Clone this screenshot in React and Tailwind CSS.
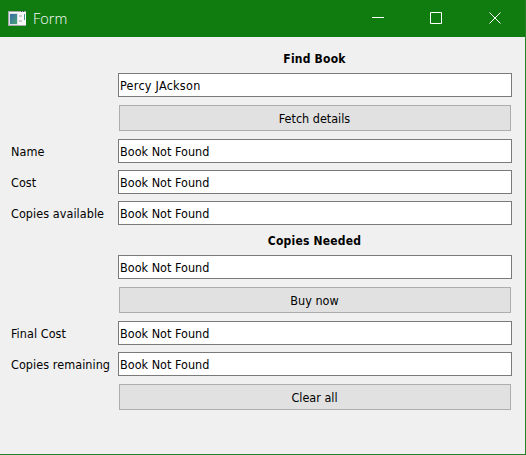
function Row({ label, children, className = '' }) {
  return (
    <div className={`flex items-center ${className}`}>
      <div className="w-[107px] shrink-0 pt-px tracking-[0.06px] whitespace-nowrap">{label}</div>
      {children}
    </div>
  );
}

function Field({ value, spacing = 'tracking-[0.02px]' }) {
  return (
    <div className={`flex h-6 w-[394px] items-center border border-[#7a7a7a] bg-white pl-px pt-px whitespace-nowrap ${spacing}`}>
      {value}
    </div>
  );
}

function Button({ children }) {
  return (
    <button className="ml-px flex h-[26px] w-[392px] items-center justify-center border border-[#adadad] bg-[#e1e1e1] pt-px pr-px">
      {children}
    </button>
  );
}

function Heading({ children }) {
  return <div className="w-[394px] pr-px text-center text-[12px] font-bold tracking-[0.2px]">{children}</div>;
}

function FormIcon() {
  return (
    <svg width="19" height="16" viewBox="0 0 19 16" shapeRendering="crispEdges">
      <defs>
        <linearGradient id="screen" x1="0" y1="0" x2="1" y2="1">
          <stop offset="0" stopColor="#3c6eaa" />
          <stop offset="1" stopColor="#45a273" />
        </linearGradient>
      </defs>
      <path d="M0 0h18v15H0z" fill="#a5a9a5" />
      <path d="M1 1h17v13H1z" fill="#f8f8f8" />
      <path d="M1 2h9v12H1z" fill="#dce4e6" />
      <path d="M2 3h7v10H2z" fill="url(#screen)" />
      <path d="M11 4h3v2h-3zM11 9h3v2h-3z" fill="#ccc" />
      <path d="M16 3h1v6h-1z" fill="#3c9c80" />
      <path d="M13 0h1v1h-1zM15 0h1v1h-1z" fill="#315b55" />
    </svg>
  );
}

export default function App() {
  return (
    <div className="flex h-[455px] w-[526px] flex-col bg-[#f0f0f0] font-['DejaVu_Sans_Condensed','DejaVu_Sans',sans-serif] text-[12.5px] leading-4 text-black">
      <header className="flex h-[37px] shrink-0 items-center border-r border-[#268026] bg-[#107c10] pl-2 text-white">
        <FormIcon />
        <span className="ml-[6px] font-['Open_Sans',sans-serif] text-[14.5px] font-light">Form</span>
        <svg className="ml-auto mr-[23px]" width="130" height="14" viewBox="0 0 130 14" fill="none" stroke="white">
          <path d="M0 5.5h12" />
          <path d="M58.5 .5h11v11h-11z" />
          <path d="M117.5 .5l11 11M128.5 .5l-11 11" />
        </svg>
      </header>
      <main className="flex-1 border-r border-b border-[#268026] pl-[11px] pt-[13px]">
        <Row className="h-[17px]"><Heading>Find Book</Heading></Row>
        <Row className="mt-[6px]"><Field value="Percy JAckson" spacing="tracking-[0.26px]" /></Row>
        <Row className="mt-2"><Button>Fetch details</Button></Row>
        <Row className="mt-2" label="Name"><Field value="Book Not Found" /></Row>
        <Row className="mt-[7px]" label="Cost"><Field value="Book Not Found" /></Row>
        <Row className="mt-[7px]" label="Copies available"><Field value="Book Not Found" /></Row>
        <Row className="mt-[7px] h-[17px]"><Heading>Copies Needed</Heading></Row>
        <Row className="mt-[6px]"><Field value="Book Not Found" /></Row>
        <Row className="mt-2"><Button>Buy now</Button></Row>
        <Row className="mt-2" label="Final Cost"><Field value="Book Not Found" /></Row>
        <Row className="mt-[7px]" label="Copies remaining"><Field value="Book Not Found" /></Row>
        <Row className="mt-2"><Button>Clear all</Button></Row>
      </main>
    </div>
  );
}
